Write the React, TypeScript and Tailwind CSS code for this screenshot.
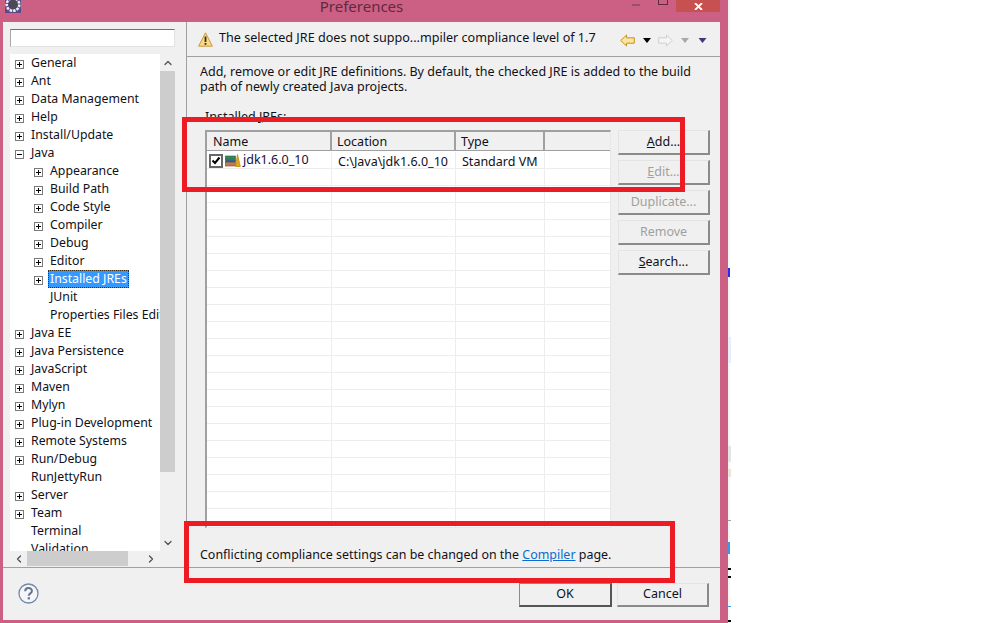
import { ChevronUp, ChevronDown, ChevronLeft, ChevronRight } from "lucide-react";

const treeItems = [
  { label: "General", box: "+", depth: 0 },
  { label: "Ant", box: "+", depth: 0 },
  { label: "Data Management", box: "+", depth: 0 },
  { label: "Help", box: "+", depth: 0 },
  { label: "Install/Update", box: "+", depth: 0 },
  { label: "Java", box: "-", depth: 0 },
  { label: "Appearance", box: "+", depth: 1 },
  { label: "Build Path", box: "+", depth: 1 },
  { label: "Code Style", box: "+", depth: 1 },
  { label: "Compiler", box: "+", depth: 1 },
  { label: "Debug", box: "+", depth: 1 },
  { label: "Editor", box: "+", depth: 1 },
  { label: "Installed JREs", box: "+", depth: 1, selected: true },
  { label: "JUnit", box: "", depth: 1 },
  { label: "Properties Files Editor", box: "", depth: 1 },
  { label: "Java EE", box: "+", depth: 0 },
  { label: "Java Persistence", box: "+", depth: 0 },
  { label: "JavaScript", box: "+", depth: 0 },
  { label: "Maven", box: "+", depth: 0 },
  { label: "Mylyn", box: "+", depth: 0 },
  { label: "Plug-in Development", box: "+", depth: 0 },
  { label: "Remote Systems", box: "+", depth: 0 },
  { label: "Run/Debug", box: "+", depth: 0 },
  { label: "RunJettyRun", box: "", depth: 0 },
  { label: "Server", box: "+", depth: 0 },
  { label: "Team", box: "+", depth: 0 },
  { label: "Terminal", box: "", depth: 0 },
  { label: "Validation", box: "", depth: 0 },
];

const sideButtons = [
  { label: "Add...", mnemonic: "A", rest: "dd...", enabled: true },
  { label: "Edit...", mnemonic: "E", rest: "dit...", enabled: false },
  { label: "Duplicate...", mnemonic: "", rest: "Duplicate...", enabled: false },
  { label: "Remove", mnemonic: "", rest: "Remove", enabled: false },
  { label: "Search...", mnemonic: "S", rest: "earch...", enabled: true },
];

function ExpandBox({ kind }: { kind: string }) {
  return (
    <svg width="9" height="9" viewBox="0 0 9 9" className="block">
      <rect x="0.5" y="0.5" width="8" height="8" fill="#fff" stroke="#7a7a7a" />
      <path d="M2 4.5h5" stroke="#000" />
      {kind === "+" && <path d="M4.5 2v5" stroke="#000" />}
    </svg>
  );
}

function TreeRow({ item }: { item: (typeof treeItems)[number] }) {
  return (
    <div className={`flex h-[18px] items-center whitespace-nowrap ${item.depth === 1 ? "pl-[24px]" : "pl-[5px]"}`}>
      <div className="w-[9px] h-[9px] mt-[3px] shrink-0">{item.box && <ExpandBox kind={item.box} />}</div>
      {item.selected ? (
        <span className="ml-[5px] h-[18px] px-[1px] leading-[16px] bg-[#3399ff] text-white border border-dotted border-[#3a2a10]">
          {item.label}
        </span>
      ) : (
        <span className="ml-[7px]">{item.label}</span>
      )}
    </div>
  );
}

function WarningIcon() {
  return (
    <svg width="15" height="15" viewBox="0 0 15 15" className="shrink-0">
      <path d="M7.5 0.8 L14.4 14.200 H0.600 Z" fill="#f7d98a" stroke="#c99a3c" strokeLinejoin="round" />
      <path d="M7.500 4.500v5.500" stroke="#3a2a10" strokeWidth="1.800" />
      <path d="M7.500 11v1.800" stroke="#3a2a10" strokeWidth="1.800" />
    </svg>
  );
}

function NavArrow({ dir, active }: { dir: "left" | "right"; active: boolean }) {
  const d = dir === "left" ? "M0.700 6.500 L6.500 1 V3.800 H14.300 V9.200 H6.500 V12 Z" : "M14.300 6.500 L8.500 1 V3.800 H0.700 V9.200 H8.500 V12 Z";
  return (
    <svg width="15" height="13" viewBox="0 0 15 13" className="block">
      <path d={d} fill={active ? "#fbe5a0" : "#f5f5f5"} stroke={active ? "#c9901c" : "#cfcfcf"} strokeLinejoin="round" />
    </svg>
  );
}

function Caret({ color, wide }: { color: string; wide?: boolean }) {
  return (
    <svg width={wide ? 9 : 8} height="5" viewBox="0 0 8 5" className="block">
      <path d="M0 0h8L4 5Z" fill={color} />
    </svg>
  );
}

function JdkIcon() {
  return (
    <svg width="16" height="13" viewBox="0 0 16 13" className="block shrink-0">
      <rect x="0.500" y="2" width="10" height="3" fill="#2f8a57" stroke="#2c5f4a" strokeWidth="0.600" />
      <rect x="0.500" y="5.500" width="10" height="2.500" fill="#34608f" stroke="#2a4a70" strokeWidth="0.600" />
      <rect x="0.500" y="8.500" width="10" height="3.500" fill="#c9764a" stroke="#7a4a2a" strokeWidth="0.600" />
      <path d="M12.500 0.500 L10.500 12.500 H15.300 Z" fill="#e0a820" stroke="#c08a10" strokeWidth="0.800" />
    </svg>
  );
}

function HelpIcon() {
  return (
    <svg width="21" height="21" viewBox="0 0 21 21">
      <circle cx="10.500" cy="10.500" r="9.500" fill="#f4f6fa" stroke="#7189a8" strokeWidth="1.300" />
      <path d="M7.200 8.200c0-4.200 6.700-4.200 6.700-.3 0 2.500-3.100 2.400-3.100 4.800" fill="none" stroke="#66738a" strokeWidth="2" />
      <rect x="9.700" y="14.200" width="2.200" height="2.200" fill="#66738a" />
    </svg>
  );
}

function AppIcon() {
  return (
    <svg width="16" height="14" viewBox="0 0 16 14">
      <rect x="0" y="0" width="16" height="14" fill="#5b4a8a" />
      <circle cx="8" cy="5.500" r="6.300" fill="none" stroke="#eeeeee" strokeWidth="2.600" strokeDasharray="2.500 1" />
      <circle cx="8" cy="5.500" r="4.500" fill="#4a4a55" />
    </svg>
  );
}

export default function App() {
  return (
    <div className="relative w-[981px] h-[623px] overflow-hidden bg-white text-[12.5px] text-[#101018] font-['Noto_Sans',sans-serif]">
      <div className="flex flex-col w-[728px] h-[623px] bg-[#cc5f84] pl-[3px] pr-[8px] pb-[3px]">
        {/* title bar */}
        <div className="relative h-[22px] shrink-0 overflow-hidden">
          <div className="absolute left-[2px] top-[-1px]"><AppIcon /></div>
          <div className="mt-[-1px] text-center text-[15px] leading-[15px] text-[#5d2b42]">Preferences</div>
          <div className="absolute left-[629px] top-[4px] w-[8px] h-[2px] bg-[#98506a]" />
          <div className="absolute left-[655px] top-[-4px] w-[10px] h-[9px] border border-[#5d2b42]" />
          <div className="absolute left-[673px] top-0 flex items-center justify-center w-[45px] h-[12px] bg-[#c75050]">
            <svg width="9" height="7" viewBox="0 0 9 7"><path d="M1 0l7 7M8 0L1 7" stroke="#fff" strokeWidth="1.800" /></svg>
          </div>
        </div>

        <div className="flex flex-col flex-1 bg-[#f0f0f0]">
          <div className="flex h-[545px]">
            {/* left pane */}
            <div className="w-[184px] shrink-0 pl-[7px] pt-[7px] bg-[#f0f0f0] border-r border-[#a0a0a0]">
              <div className="w-[165px] h-[18px] bg-white border border-[#a8a8a8] border-t-[#707070] border-b-[#e3e3e3] border-r-[#e3e3e3]" />
              <div className="flex mt-[7px] w-[165px] h-[497px]">
                <div className="w-[150px] h-[497px] overflow-hidden bg-white text-[12.3px]">
                  {treeItems.map((item) => (
                    <TreeRow key={item.label} item={item} />
                  ))}
                </div>
                <div className="flex flex-col w-[15px] bg-[#f0f0f0]">
                  <div className="flex items-center justify-center h-[17px]"><ChevronUp size={12} strokeWidth={2.500} color="#505050" /></div>
                  <div className="h-[401px] bg-[#cdcdcd]" />
                  <div className="flex-1" />
                  <div className="flex items-center justify-center h-[17px]"><ChevronDown size={12} strokeWidth={2.500} color="#505050" /></div>
                </div>
              </div>
              <div className="flex items-center w-[150px] h-[15px] bg-[#f0f0f0]">
                <div className="flex items-center justify-center w-[17px]"><ChevronLeft size={12} strokeWidth={2.500} color="#505050" /></div>
                <div className="w-[101px] h-[15px] bg-[#cdcdcd]" />
                <div className="flex flex-1 items-center justify-end pr-[3px]"><ChevronRight size={12} strokeWidth={2.500} color="#505050" /></div>
              </div>
            </div>

            {/* right pane */}
            <div className="flex flex-col flex-1 min-w-0">
              <div className="flex items-center h-[35px] pl-[11px] pr-[13px] border-b border-[#a0a0a0] shrink-0">
                <WarningIcon />
                <span className="ml-[6px] flex-1 mt-[-2px] whitespace-nowrap text-[12.6px]">The selected JRE does not suppo...mpiler compliance level of 1.7</span>
                <div className="flex items-center mt-[3px]">
                  <NavArrow dir="left" active />
                  <span className="ml-[8px]"><Caret color="#000" /></span>
                  <span className="ml-[7px]"><NavArrow dir="right" active={false} /></span>
                  <span className="ml-[8px]"><Caret color="#a8a8a8" /></span>
                  <span className="ml-[9px]"><Caret color="#3c3a78" wide /></span>
                </div>
              </div>
              <div className="pl-[13px] pt-[7px] leading-[15px] w-[515px]">
                Add, remove or edit JRE definitions. By default, the checked JRE is added to the build path of newly created Java projects.
              </div>
              <div className="pl-[18px] mt-[14px] h-[18px] leading-[18px]">
                Installed <span className="underline">J</span>REs:
              </div>
              <div className="flex pl-[18px] mt-[4px]">
                {/* table */}
                <div className="w-[406px] h-[398px] border-l-2 border-t-2 border-[#a0a0a0] border-r border-r-[#e8e8e8] border-b border-b-[#e8e8e8] bg-white overflow-hidden shrink-0">
                  <div className="grid grid-cols-[125px_124px_89px_1fr] h-[19px] bg-[#f0f0f0] border-b border-[#a0a0a0] leading-[19px]">
                    <div className="pl-[6px] border-r-2 border-[#a0a0a0]">Name</div>
                    <div className="pl-[5px] border-r-2 border-[#a0a0a0]">Location</div>
                    <div className="pl-[5px] border-r-2 border-[#a0a0a0]">Type</div>
                    <div />
                  </div>
                  <div className="grid grid-cols-[125px_124px_89px_1fr] auto-rows-[17px] leading-[20px] mt-px">
                    <div className="flex items-center border-r border-b border-[#ededed] pl-[2px]">
                      <div className="flex items-center justify-center w-[14px] h-[14px] mt-px border-2 border-[#666] shrink-0">
                        <svg width="10" height="9" viewBox="0 0 10 9"><path d="M1.500 4.500 L4 7 L8.500 1.500" fill="none" stroke="#000" strokeWidth="2" /></svg>
                      </div>
                      <span className="ml-[2px]"><JdkIcon /></span>
                      <span className="ml-[2px] text-[#101040]">jdk1.6.0_10</span>
                    </div>
                    <div className="pl-[6px] border-r border-b border-[#ededed] whitespace-nowrap">C:\Java\jdk1.6.0_10</div>
                    <div className="pl-[6px] border-r border-b border-[#ededed] whitespace-nowrap">Standard VM</div>
                    <div className="border-b border-[#ededed]" />
                    {Array.from({ length: 88 }).map((_, i) => (
                      <div key={i} className={(i + 1) % 4 === 0 ? "border-b border-[#ededed]" : "border-r border-b border-[#ededed]"} />
                    ))}
                  </div>
                </div>
                {/* side buttons */}
                <div className="flex flex-col gap-[5px] ml-[7px]">
                  {sideButtons.map((b) => (
                    <div
                      key={b.label}
                      className={`flex items-center justify-center w-[92px] h-[25px] border border-t-[#e4e4e4] border-l-[#e4e4e4] border-r-2 border-b-2 border-r-[#8a8a8a] border-b-[#8a8a8a] ${b.enabled ? "text-[#101018]" : "text-[#a0a0a0]"}`}
                    >
                      {b.mnemonic && <span className="underline">{b.mnemonic}</span>}
                      {b.rest}
                    </div>
                  ))}
                </div>
              </div>
              <div className="pl-[13px] mt-[18px] leading-[18px] text-[12.45px]">
                Conflicting compliance settings can be changed on the{" "}
                <span className="text-[#0a6cd0] underline">Compiler</span> page.
              </div>
            </div>
          </div>

          {/* bottom bar */}
          <div className="flex items-start flex-1 border-t border-[#a0a0a0] pl-[15px] pr-[11px] pt-[15px]">
            <HelpIcon />
            <div className="ml-auto flex gap-[5px]">
              <div className="flex items-center justify-center w-[93px] h-[24px] pb-px border border-[#8a8a8a] border-r-2 border-b-2 border-r-[#555] border-b-[#555]">OK</div>
              <div className="flex items-center justify-center w-[92px] h-[24px] pb-px border border-t-[#e4e4e4] border-l-[#e4e4e4] border-r-2 border-b-2 border-r-[#8a8a8a] border-b-[#8a8a8a]">Cancel</div>
            </div>
          </div>
        </div>
      </div>

      {/* annotation rectangles drawn over the screenshot */}
      <div className="absolute left-[182px] top-[117px] w-[503px] h-[75px] border-[5px] border-[#ed1c24]" />
      <div className="absolute left-[184px] top-[521px] w-[491px] h-[62px] border-[5px] border-[#ed1c24]" />

      {/* leftovers of the window behind */}
      <div className="absolute left-[728px] top-0 w-[2px] h-[623px] bg-[#f4f4f4]" />
      <div className="absolute left-[728px] top-[268px] w-[2px] h-[9px] bg-[#2a2af0]" />
      <div className="absolute left-[728px] top-[337px] w-[3px] h-[26px] bg-[#e6eef8]" />
      <div className="absolute left-[728px] top-[446px] w-[3px] h-[16px] bg-[#e4e4e4]" />
      <div className="absolute left-[728px] top-[469px] w-[3px] h-[8px] bg-[#e8e4d8]" />
      <div className="absolute left-[728px] top-[520px] w-[3px] h-px bg-[#a0a0a0]" />
      <div className="absolute left-[728px] top-[542px] w-[2px] h-[12px] bg-[#3a9ae8]" />
      <div className="absolute left-[728px] top-[568px] w-[3px] h-[2px] bg-black" />
      <div className="absolute left-[728px] top-[576px] w-[3px] h-[2px] bg-black" />
      <div className="absolute left-[728px] top-[606px] w-[3px] h-px bg-[#3a9ae8]" />
      <div className="absolute left-[728px] top-[620px] w-[3px] h-[2px] bg-black" />
    </div>
  );
}
